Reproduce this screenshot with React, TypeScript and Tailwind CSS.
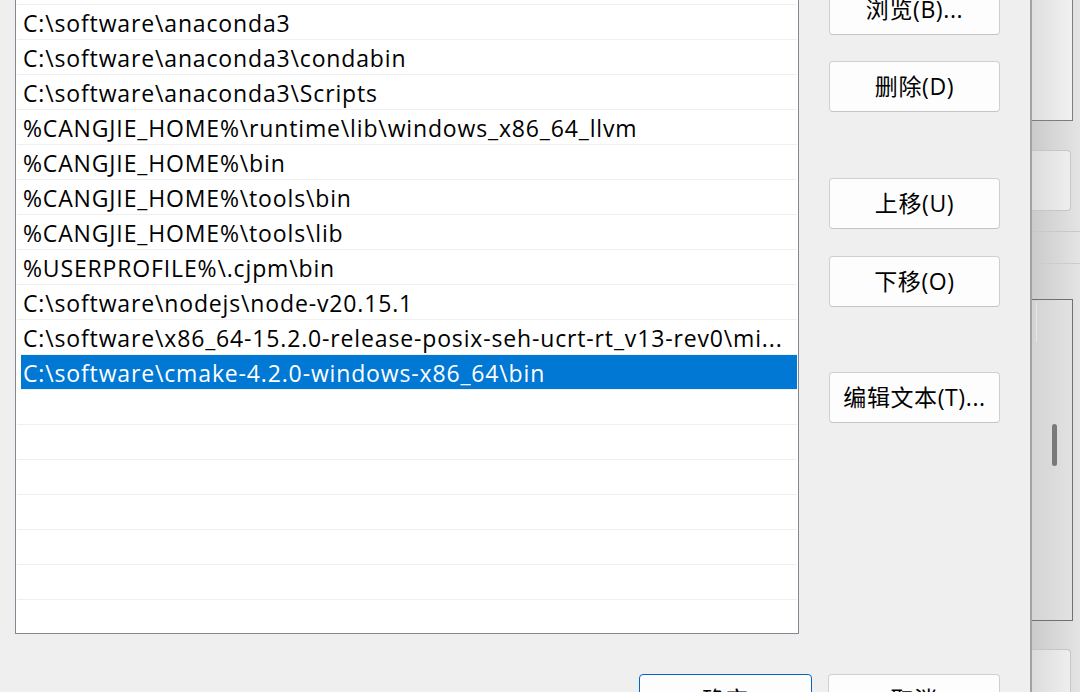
const paths = [
  '',
  'C:\\software\\anaconda3',
  'C:\\software\\anaconda3\\condabin',
  'C:\\software\\anaconda3\\Scripts',
  '%CANGJIE_HOME%\\runtime\\lib\\windows_x86_64_llvm',
  '%CANGJIE_HOME%\\bin',
  '%CANGJIE_HOME%\\tools\\bin',
  '%CANGJIE_HOME%\\tools\\lib',
  '%USERPROFILE%\\.cjpm\\bin',
  'C:\\software\\nodejs\\node-v20.15.1',
  'C:\\software\\x86_64-15.2.0-release-posix-seh-ucrt-rt_v13-rev0\\mi...',
  'C:\\software\\cmake-4.2.0-windows-x86_64\\bin',
  '',
  '',
  '',
  '',
  '',
  '',
  '',
];

const SELECTED = 11;

const font = "font-['Open_Sans','Noto_Sans_CJK_SC',sans-serif]";

const WinButton = ({
  label,
  className = '',
  primary = false,
}: {
  label: string;
  className?: string;
  primary?: boolean;
}) => (
  <div
    className={`h-[51px] shrink-0 rounded-[4px] border bg-[#fdfdfd] flex items-center justify-center text-[23px] tracking-[0.6px] text-black ${
      primary ? 'border-[#0067c0]' : 'border-[#d0d0d0] border-b-[#c4c4c4]'
    } ${className}`}
  >
    {label}
  </div>
);

const PathList = () => (
  <div className="w-[784px] h-[665px] shrink-0 border border-[#838790] bg-white px-px overflow-hidden">
    {paths.map((p, i) => (
      <div key={i} className="h-[35px] border-b border-[#efefef] flex">
        <div
          className={`ml-[4px] flex-1 flex items-center pl-[2px] pt-[2px] whitespace-nowrap overflow-hidden text-[23px] tracking-[0.85px] ${
            i === SELECTED ? 'bg-[#0078d4] text-white' : 'text-black'
          }`}
        >
          {p}
        </div>
      </div>
    ))}
  </div>
);

const BackWindow = () => (
  <div className="flex-1 flex flex-col bg-gradient-to-r from-[#cbcbcb] to-[#e4e4e4] border-l-2 border-[#a2a2a2]">
    <div className="h-[121px] w-[41px] shrink-0 border-r border-b border-[#7b7c84] bg-gradient-to-r from-[#dedede] to-[#f1f1f1]" />
    <div className="mt-[29px] h-[61px] w-[39px] shrink-0 rounded-r-[4px] border border-l-0 border-[#c6c6c6] bg-gradient-to-r from-[#dcdcdc] to-[#eeeeee]" />
    <div className="mt-[20px] h-px shrink-0 bg-[#c9c9c9]" />
    <div className="mt-[31px] h-px shrink-0 bg-[#cdcdcd]" />
    <div className="mt-[35px] h-[322px] w-[41px] shrink-0 border-r border-y border-[#6f7078] bg-gradient-to-r from-[#d4d4d4] to-[#e2e2e2] flex">
      <div className="w-[4px]" />
      <div className="mt-[2px] h-[40px] w-px bg-[#e6e6e6]" />
      <div className="flex-1 flex justify-center">
        <div className="mt-[124px] h-[42px] w-[5px] rounded-full bg-[#7a7a7a]" />
      </div>
    </div>
    <div className="mt-[28px] h-[60px] w-[39px] shrink-0 rounded-tr-[4px] border-t border-r border-[#c6c6c6] bg-gradient-to-r from-[#dcdcdc] to-[#eeeeee]" />
  </div>
);

export default function App() {
  return (
    <div className={`w-[1080px] h-[692px] flex overflow-hidden bg-[#efefef] ${font}`}>
      <div className="w-[1030px] h-full shrink-0 flex flex-col overflow-hidden">
        <div className="-mt-[31px] pl-[15px] flex">
          <PathList />
          <div className="ml-[30px] w-[171px] flex flex-col">
            <WinButton label="浏览(B)..." className="mt-[15px]" />
            <WinButton label="删除(D)" className="mt-[26px]" />
            <WinButton label="上移(U)" className="mt-[66px]" />
            <WinButton label="下移(O)" className="mt-[27px]" />
            <WinButton label="编辑文本(T)..." className="mt-[65px]" />
          </div>
        </div>
        <div className="mt-[40px] pr-[30px] flex justify-end gap-[16px]">
          <WinButton label="确定" primary className="w-[173px]" />
          <WinButton label="取消" className="w-[172px]" />
        </div>
      </div>
      <BackWindow />
    </div>
  );
}
